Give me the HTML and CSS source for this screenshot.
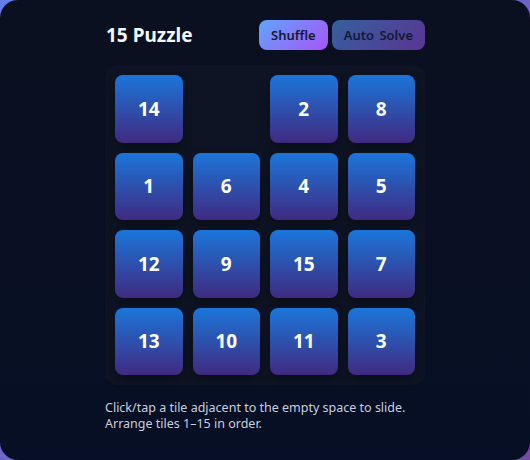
FILE: index.html
```html
<!DOCTYPE html>
<html>
<head>
<meta charset="utf-8">
<link rel="stylesheet" href="styles.css">
</head>
<body>
<div class="card">
  <div class="wrap">
    <div class="header">
      <h1 class="title">15 Puzzle</h1>
      <div class="actions">
        <button class="btn btn-primary">Shuffle</button>
        <button class="btn btn-muted">Auto Solve</button>
      </div>
    </div>
    <div class="board">
      <div class="tile">14</div><div class="tile empty"></div><div class="tile">2</div><div class="tile">8</div>
      <div class="tile">1</div><div class="tile">6</div><div class="tile">4</div><div class="tile">5</div>
      <div class="tile">12</div><div class="tile">9</div><div class="tile">15</div><div class="tile">7</div>
      <div class="tile">13</div><div class="tile">10</div><div class="tile">11</div><div class="tile">3</div>
    </div>
    <p class="hint">Click/tap a tile adjacent to the empty space to slide.<br>Arrange tiles 1–15 in order.</p>
  </div>
</div>
</body>
</html>
```
FILE: styles.css
```css
* { box-sizing: border-box; }
html, body { margin: 0; height: 100%; }
body {
  background: linear-gradient(135deg, #667eea, #764ba2);
  font-family: "Noto Sans", "Open Sans", sans-serif;
}
.card {
  width: 530px;
  height: 460px;
  border-radius: 18px;
  background: linear-gradient(180deg, #0b1020, #060f25);
  display: flex;
  justify-content: center;
  padding-top: 20px;
}
.wrap { width: 320px; }
.header {
  display: flex;
  align-items: center;
  justify-content: space-between;
  height: 30px;
  margin-bottom: 15px;
}
.title {
  margin: 0 0 0 1px;
  font-size: 19px;
  font-weight: 700;
  color: #f3f6fc;
}
.actions { display: flex; gap: 4px; }
.btn {
  height: 30px;
  border: none;
  border-radius: 8px;
  padding: 0 12px;
  font-family: inherit;
  font-size: 13px;
  font-weight: 600;
  word-spacing: 2px;
  color: #111a33;
}
.btn-primary { background: linear-gradient(135deg, #60a5fa, #a855f7); }
.btn-muted { background: linear-gradient(135deg, #35609e, #5a3592); }
.board {
  width: 320px;
  height: 320px;
  padding: 10px;
  border-radius: 12px;
  background: #0e1424;
  display: grid;
  grid-template-columns: repeat(4, 1fr);
  grid-template-rows: repeat(4, 1fr);
  gap: 10px;
}
.tile {
  border-radius: 8px;
  background: linear-gradient(180deg, #1b76da, #402a80);
  display: flex;
  align-items: center;
  justify-content: center;
  color: #fff;
  font-size: 19px;
  font-weight: 700;
  box-shadow: 0 4px 10px rgba(0,0,0,0.35);
}
.tile.empty { background: transparent; box-shadow: none; }
.hint {
  margin: 15px 0 0;
  font-size: 12.5px;
  line-height: 16px;
  color: #c9cede;
}
```
